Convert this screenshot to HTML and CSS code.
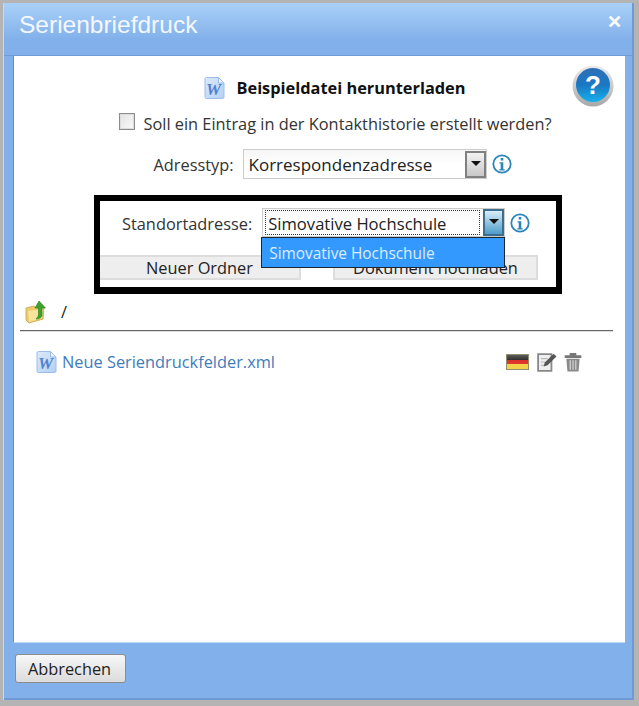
FILE: index.html
```html
<!DOCTYPE html>
<html lang="de">
<head>
    <meta charset="UTF-8">
    <title>Serienbriefdruck</title>
    <link rel="stylesheet" href="styles.css">
</head>
<body>
<svg class="defs" width="0" height="0">
    <defs>
        <linearGradient id="wordFill" x1="0" y1="0" x2="1" y2="1">
            <stop offset="0" stop-color="#dceafb"/>
            <stop offset="1" stop-color="#b4d0f3"/>
        </linearGradient>
        <symbol id="wordIcon" viewBox="0 0 22 24">
            <path d="M2.500 1.500h12l5.500 5.500v14a1.500 1.500 0 0 1-1.500 1.500h-16a1.500 1.500 0 0 1-1.500-1.500v-18a1.500 1.500 0 0 1 1.500-1.500z" fill="url(#wordFill)" stroke="#9dbde8"/>
            <path d="M14.500 1.500v5.500h5.500z" fill="#f2f7fe" stroke="#9dbde8"/>
            <text x="9.500" y="19" class="word-mark">W</text>
        </symbol>
        <symbol id="infoIcon" viewBox="0 0 20 20">
            <circle cx="10" cy="10" r="8.700" fill="#fff" stroke="#2a86b8" stroke-width="1.800"/>
            <rect x="8.700" y="4" width="2.600" height="2.500" fill="#2a86b8"/>
            <path d="M7.500 8.300h3.800v7h1.400v1.200h-5.400v-1.200h1.400v-5.800h-1.200z" fill="#2a86b8"/>
        </symbol>
    </defs>
</svg>

<div class="dialog">
    <div class="dialog-title">
        <span>Serienbriefdruck</span>
        <span class="dialog-close">&#10005;</span>
    </div>

    <div class="dialog-content">
        <svg class="help-icon" viewBox="0 0 42 42">
            <defs>
                <linearGradient id="helpRing" x1="0" y1="0" x2="0" y2="1">
                    <stop offset="0" stop-color="#ececec"/>
                    <stop offset="1" stop-color="#a8a8a8"/>
                </linearGradient>
                <linearGradient id="helpBall" x1="0" y1="0" x2="0" y2="1">
                    <stop offset="0" stop-color="#2d6fb8"/>
                    <stop offset="0.500" stop-color="#1a78c4"/>
                    <stop offset="1" stop-color="#17b0ea"/>
                </linearGradient>
            </defs>
            <circle cx="21" cy="21" r="20.500" fill="url(#helpRing)"/>
            <circle cx="21" cy="20" r="17" fill="url(#helpBall)"/>
            <text x="21" y="29" class="help-mark">?</text>
        </svg>

        <div class="row row-download">
            <svg class="word-icon"><use href="#wordIcon"/></svg>
            <b>Beispieldatei herunterladen</b>
        </div>

        <div class="row row-history">
            <span class="checkbox"></span>
            <span>Soll ein Eintrag in der Kontakthistorie erstellt werden?</span>
        </div>

        <div class="row row-type">
            <span class="field-label">Adresstyp:</span>
            <div class="select select-type">
                <span class="select-value">Korrespondenzadresse</span>
                <span class="select-arrow"></span>
            </div>
            <svg class="info-icon"><use href="#infoIcon"/></svg>
        </div>

        <div class="highlight">
            <div class="row row-location">
                <span class="field-label">Standortadresse:</span>
                <div class="select select-location">
                    <span class="select-value"><span class="focus-ring">Simovative Hochschule</span></span>
                    <span class="select-arrow select-arrow-active"></span>
                    <div class="select-list">Simovative Hochschule</div>
                </div>
                <svg class="info-icon"><use href="#infoIcon"/></svg>
            </div>
            <div class="highlight-buttons">
                <div class="flat-btn flat-btn-folder">Neuer Ordner</div>
                <div class="flat-btn flat-btn-upload">Dokument hochladen</div>
            </div>
        </div>

        <div class="path-row">
            <svg class="folder-up" viewBox="0 0 22 24">
                <path d="M1 8l8-2 2 2 8-1-1 12-14 4-3-3z" fill="#eccb6a" stroke="#c9a446" stroke-width="0.800"/>
                <path d="M3 11l15-2-1 9-13 4z" fill="#f7e39b"/>
                <path d="M14 1l6.500 7h-3.500v8c-1 2-3.500 3-6 3 1.500-1.500 2.500-3 2.500-5v-6h-3.500z" fill="#3da32e" stroke="#25801d" stroke-width="0.600"/>
            </svg>
            <span class="path-text">/</span>
        </div>

        <div class="file-row">
            <svg class="word-icon"><use href="#wordIcon"/></svg>
            <a class="file-link" href="#">Neue Seriendruckfelder.xml</a>
            <div class="file-actions">
                <div class="flag"></div>
                <svg class="action-icon" viewBox="1 1 18 18">
                    <path d="M2 3h12v15h-12z" fill="#efefef" stroke="#888" stroke-width="1.600"/>
                    <path d="M4.500 7h6M4.500 10h4M4.500 13h4" stroke="#bbb"/>
                    <path d="M7 14l1-3.500 8-8 2.500 2.500-8 8z" fill="#555"/>
                </svg>
                <svg class="action-icon action-icon-trash" viewBox="2 1 16 18">
                    <path d="M3 4.500h14v1.500h-14zM7.500 4.500v-2h5v2" fill="#777" stroke="#777"/>
                    <path d="M4 7h12l-1 11.500h-10z" fill="#8a8a8a"/>
                    <path d="M7.500 8.500v8.500M10 8.500v8.500M12.500 8.500v8.500" stroke="#d5d5d5" stroke-width="1.100"/>
                </svg>
            </div>
        </div>
    </div>

    <div class="dialog-footer">
        <button class="cancel-btn" type="button">Abbrechen</button>
    </div>
</div>
</body>
</html>
```

FILE: styles.css
```css
html, body {
    margin: 0;
    height: 100%;
}

body {
    background: #b4b4b4;
    font-family: "Open Sans", "Noto Sans", sans-serif;
    font-size: 16.35px;
    color: #222;
    overflow: hidden;
}

.defs {
    display: block;
    height: 0;
}

.dialog {
    box-sizing: border-box;
    width: 630px;
    height: 697px;
    margin: 3px 0 0 4px;
    background: #82b0ea;
    border: 1px solid #6f9ad2;
    border-width: 0 2px 2px 0;
    box-shadow: -1px 0 0 #c9d9ef;
    display: flex;
    flex-direction: column;
}

.dialog-title {
    height: 53px;
    flex: none;
    padding: 8px 10px 0 15px;
    box-sizing: border-box;
    background: linear-gradient(#a9d1f8, #82b0ea 70%);
    font-family: "Liberation Sans", Arial, sans-serif;
    font-size: 24.5px;
    color: #f4f8fd;
    display: flex;
    justify-content: space-between;
    border-bottom: 1px solid #6f9ad2;
}

.dialog-close {
    font-size: 18px;
    font-weight: bold;
    line-height: 22px;
    color: #fff;
}

.dialog-content {
    position: relative;
    box-sizing: border-box;
    height: 587px;
    flex: none;
    margin: 0 7px 0 9px;
    background: #fff;
    border-left: 1px solid #5f8fcf;
    border-bottom: 1px solid #b9dcf5;
    padding-top: 18px;
}

.help-icon {
    position: absolute;
    top: 9px;
    right: 11px;
    width: 42px;
    height: 42px;
}

.help-mark {
    font-family: "Liberation Sans", Arial, sans-serif;
    font-size: 26px;
    font-weight: bold;
    fill: #fff;
    text-anchor: middle;
}

.word-mark {
    font-family: "Liberation Serif", serif;
    font-size: 17px;
    font-weight: bold;
    font-style: italic;
    fill: #4f83d2;
    text-anchor: middle;
}

.row {
    display: flex;
    align-items: center;
    justify-content: center;
}

.row-download {
    height: 28px;
    gap: 11px;
    padding-left: 30px;
    color: #111;
}

.row-history {
    margin-top: 8px;
    height: 28px;
    gap: 8px;
    padding-left: 32px;
    color: #333;
}

.row-type {
    margin-top: 11px;
    gap: 9px;
    padding-left: 26px;
    color: #333;
}

.row-type .info-icon {
    margin-left: -4px;
}

.field-label {
    padding-top: 2px;
}

.word-icon {
    width: 22px;
    height: 24px;
    flex: none;
}

.checkbox {
    box-sizing: border-box;
    width: 16px;
    height: 17px;
    border: 1px solid #8c8c8c;
    box-shadow: inset 0 0 0 1px #ddd;
    background: linear-gradient(135deg, #e2e2e2, #fafafa);
    margin-top: -6px;
}

.select {
    position: relative;
    box-sizing: border-box;
    display: flex;
    align-items: center;
    height: 29px;
    border: 1px solid #ccc;
    background: linear-gradient(#f6f6f6, #fff 50%);
    color: #222;
    font-size: 17px;
}

.select-type {
    width: 244px;
    height: 30px;
}

.select-location {
    width: 243px;
    font-size: 16.6px;
}

.select-value {
    flex: 1;
    padding: 1px 5px 0;
}

.select-location .select-value {
    padding: 0 4px;
}

.focus-ring {
    display: block;
    border: 1px dotted #333;
    line-height: 25px;
    height: 23px;
    margin: 0 -1px 0 -2px;
    padding-left: 2px;
}

.select-arrow {
    position: relative;
    box-sizing: border-box;
    flex: none;
    width: 21px;
    height: 27px;
    border: 2px solid #808080;
    background: linear-gradient(#f2f2f2, #c8c8c8);
}

.select-arrow::after {
    content: "";
    position: absolute;
    top: 8px;
    left: 4px;
    border: 5px solid transparent;
    border-top-color: #111;
}

.select-arrow-active {
    border-color: #3d6f8c;
    background: linear-gradient(#d9edf8, #4d9ccb);
}

.select-list {
    position: absolute;
    top: 28px;
    left: -2px;
    right: -1px;
    height: 31px;
    box-sizing: border-box;
    padding-left: 7px;
    line-height: 31px;
    font-size: 15.4px;
    background: #3399ff;
    border: 1px solid #1d2733;
    color: #dcecff;
    z-index: 2;
}

.info-icon {
    width: 20px;
    height: 20px;
    flex: none;
}

.highlight {
    box-sizing: border-box;
    width: 468px;
    height: 99px;
    margin: 16px 0 0 80px;
    border: 6px solid #000;
    border-bottom-width: 7px;
}

.row-location {
    margin-top: 7px;
    gap: 10px;
    justify-content: flex-start;
    padding-left: 22px;
    color: #333;
}

.row-location .info-icon {
    margin-left: -5px;
}

.highlight-buttons {
    display: flex;
    justify-content: space-between;
    margin-top: 18px;
}

.flat-btn {
    box-sizing: border-box;
    height: 25px;
    line-height: 22px;
    text-align: center;
    background: #eee;
    border: 2px solid #ddd;
    color: #222;
}

.flat-btn-folder {
    width: 201px;
    border-left: 0;
}

.flat-btn-upload {
    width: 205px;
    margin-right: 18px;
}

.path-row {
    display: flex;
    align-items: center;
    gap: 14px;
    height: 36px;
    margin: 0 12px 0 6px;
    padding-left: 5px;
    border-bottom: 1px solid #666;
    box-shadow: 0 1px 0 #ddd;
}

.folder-up {
    width: 22px;
    height: 24px;
    flex: none;
}

.path-text {
    color: #222;
}

.file-row {
    display: flex;
    align-items: center;
    gap: 4px;
    margin-top: 19px;
    padding: 0 42px 0 22px;
}

.file-link {
    color: #3f7cbc;
    text-decoration: none;
}

.file-actions {
    display: flex;
    align-items: center;
    gap: 8px;
    margin-left: auto;
}

.flag {
    box-sizing: border-box;
    width: 23px;
    height: 16px;
    border: 1px solid #8f8f6f;
    background: linear-gradient(#5a5a5a, #333 33%, #d8302a 33%, #e2382e 66%, #f3d34c 66%);
}

.action-icon {
    width: 20px;
    height: 20px;
}

.action-icon-trash {
    margin-left: -2px;
}

.dialog-footer {
    flex: 1;
    padding: 11px 0 0 11px;
}

.cancel-btn {
    width: 111px;
    height: 29px;
    padding: 0 2px 0 0;
    border: 1px solid #8d8d8d;
    border-radius: 3px;
    background: linear-gradient(#f7f7f7, #e6e6e6 60%, #dcdcdc);
    font-family: inherit;
    font-size: 16.35px;
    color: #222;
}
```
